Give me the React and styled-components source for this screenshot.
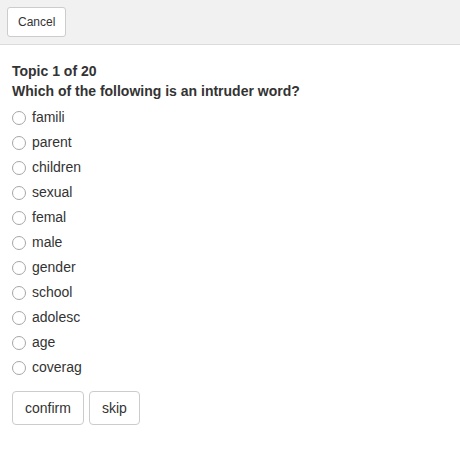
import React from "react";
import styled, { createGlobalStyle } from "styled-components";

const Global = createGlobalStyle`
  html, body { margin: 0; padding: 0; background: #fff; }
  body { font-family: "Liberation Sans", Arial, sans-serif; color: #333; font-size: 14px; line-height: 1.42857; }
  * { box-sizing: border-box; }
`;

const Header = styled.div`
  display: flex;
  align-items: center;
  padding: 7px;
  background: #f1f1f1;
  border-bottom: 1px solid #dcdcdc;
`;

const Button = styled.button`
  font-family: "Liberation Sans", Arial, sans-serif;
  font-size: ${(p) => (p.$small ? "12px" : "14px")};
  line-height: ${(p) => (p.$small ? "18px" : "20px")};
  padding: ${(p) => (p.$small ? "5px 10px" : "6px 12px")};
  color: #333;
  background: #fff;
  border: 1px solid #ccc;
  border-radius: ${(p) => (p.$small ? "3px" : "4px")};
  cursor: pointer;
`;

const Main = styled.div`
  padding: 16px 12px;
`;

const Title = styled.div`
  font-weight: bold;
  font-size: 14px;
  line-height: 20px;
`;

const Options = styled.div`
  display: flex;
  flex-direction: column;
  margin-top: 4px;
`;

const Option = styled.label`
  display: flex;
  align-items: center;
  height: 25px;
  gap: 6px;
  font-size: 14px;
`;

const Radio = styled.input`
  appearance: none;
  margin: 0;
  width: 14px;
  height: 14px;
  border: 1px solid #a6a6a6;
  border-radius: 50%;
  background: #fff;
  flex: none;
`;

const Actions = styled.div`
  display: flex;
  gap: 5px;
  margin-top: 11px;
`;

const words = ["famili", "parent", "children", "sexual", "femal", "male", "gender", "school", "adolesc", "age", "coverag"];

export default function App() {
  return (
    <>
      <Global />
      <Header>
        <Button $small>Cancel</Button>
      </Header>
      <Main>
        <Title>Topic 1 of 20</Title>
        <Title>Which of the following is an intruder word?</Title>
        <Options>
          {words.map((w) => (
            <Option key={w}>
              <Radio type="radio" name="word" />
              {w}
            </Option>
          ))}
        </Options>
        <Actions>
          <Button>confirm</Button>
          <Button>skip</Button>
        </Actions>
      </Main>
    </>
  );
}
